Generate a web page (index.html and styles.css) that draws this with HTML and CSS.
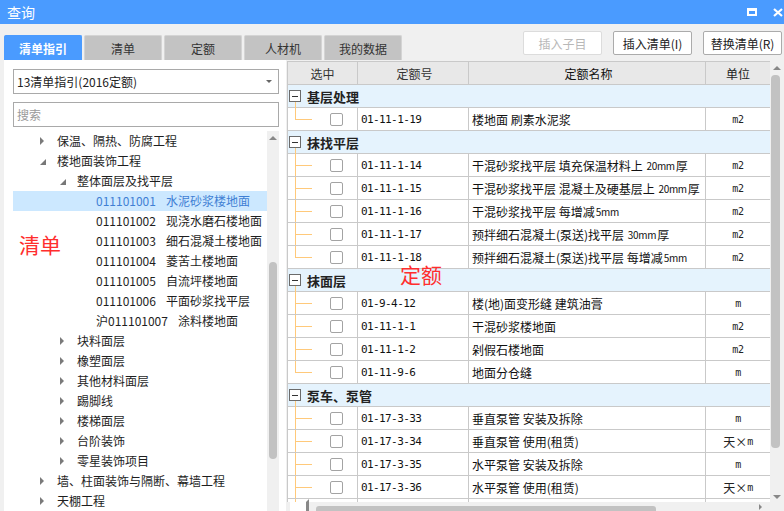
FILE: index.html
```html
<!DOCTYPE html>
<html lang="zh">
<head>
<meta charset="utf-8">
<title>查询</title>
<link rel="stylesheet" href="styles.css">
</head>
<body>
<div class="titlebar">
  <span class="title">查询</span>
  <div class="win-btns">
    <span class="max-icon"></span>
    <svg class="close-icon" width="10" height="9" viewBox="0 0 10 9"><path d="M1 1 L9 8 M9 1 L1 8" stroke="#fff" stroke-width="2.2"/></svg>
  </div>
</div>
<div class="toolbar">
  <div class="tabs">
    <div class="tab active">清单指引</div>
    <div class="tab">清单</div>
    <div class="tab">定额</div>
    <div class="tab">人材机</div>
    <div class="tab">我的数据</div>
  </div>
  <div class="actions">
    <button class="btn disabled">插入子目</button>
    <button class="btn">插入清单(I)</button>
    <button class="btn">替换清单(R)</button>
  </div>
</div>
<div class="main">
  <div class="left">
    <div class="select"><span>13清单指引(2016定额)</span><span class="caret"></span></div>
    <div class="search">搜索</div>
    <div class="tree">
      <div class="tree-list">
        <div class="tr l1"><span class="tw closed"></span>保温、隔热、防腐工程</div>
        <div class="tr l1"><span class="tw open"></span>楼地面装饰工程</div>
        <div class="tr l2"><span class="tw open"></span>整体面层及找平层</div>
        <div class="tr l3 sel"><span class="code">011101001</span>水泥砂浆楼地面</div>
        <div class="tr l3"><span class="code">011101002</span>现浇水磨石楼地面</div>
        <div class="tr l3"><span class="code">011101003</span>细石混凝土楼地面</div>
        <div class="tr l3"><span class="code">011101004</span>菱苦土楼地面</div>
        <div class="tr l3"><span class="code">011101005</span>自流坪楼地面</div>
        <div class="tr l3"><span class="code">011101006</span>平面砂浆找平层</div>
        <div class="tr l3"><span class="code">沪011101007</span>涂料楼地面</div>
        <div class="tr l2"><span class="tw closed"></span>块料面层</div>
        <div class="tr l2"><span class="tw closed"></span>橡塑面层</div>
        <div class="tr l2"><span class="tw closed"></span>其他材料面层</div>
        <div class="tr l2"><span class="tw closed"></span>踢脚线</div>
        <div class="tr l2"><span class="tw closed"></span>楼梯面层</div>
        <div class="tr l2"><span class="tw closed"></span>台阶装饰</div>
        <div class="tr l2"><span class="tw closed"></span>零星装饰项目</div>
        <div class="tr l1"><span class="tw closed"></span>墙、柱面装饰与隔断、幕墙工程</div>
        <div class="tr l1"><span class="tw closed"></span>天棚工程</div>
      </div>
      <div class="vscroll small">
        <span class="arr up"></span>
        <div class="track"><div class="thumb"></div></div>
      </div>
      <div class="note note-left">清单</div>
    </div>
  </div>
  <div class="right">
    <div class="upper">
      <div class="grid">
        <div class="row head">
          <div class="c c1h">选中</div><div class="c c2 center">定额号</div><div class="c c3 center">定额名称</div><div class="c c4">单位</div>
        </div>
        <div class="row g"><span class="box"></span>基层处理</div>
        <div class="row d last"><div class="c c1"><span class="chk"></span></div><div class="c c2">01-11-1-19</div><div class="c c3">楼地面 刷素水泥浆</div><div class="c c4">m2</div></div>
        <div class="row g"><span class="box"></span>抹找平层</div>
        <div class="row d"><div class="c c1"><span class="chk"></span></div><div class="c c2">01-11-1-14</div><div class="c c3">干混砂浆找平层 填充保温材料上 <span class="n">20mm</span>厚</div><div class="c c4">m2</div></div>
        <div class="row d"><div class="c c1"><span class="chk"></span></div><div class="c c2">01-11-1-15</div><div class="c c3">干混砂浆找平层 混凝土及硬基层上 <span class="n">20mm</span>厚</div><div class="c c4">m2</div></div>
        <div class="row d"><div class="c c1"><span class="chk"></span></div><div class="c c2">01-11-1-16</div><div class="c c3">干混砂浆找平层 每增减<span class="n">5mm</span></div><div class="c c4">m2</div></div>
        <div class="row d"><div class="c c1"><span class="chk"></span></div><div class="c c2">01-11-1-17</div><div class="c c3">预拌细石混凝土(泵送)找平层 <span class="n">30mm</span>厚</div><div class="c c4">m2</div></div>
        <div class="row d last"><div class="c c1"><span class="chk"></span></div><div class="c c2">01-11-1-18</div><div class="c c3">预拌细石混凝土(泵送)找平层 每增减<span class="n">5mm</span></div><div class="c c4">m2</div></div>
        <div class="row g"><span class="box"></span>抹面层</div>
        <div class="row d"><div class="c c1"><span class="chk"></span></div><div class="c c2">01-9-4-12</div><div class="c c3">楼(地)面变形缝 建筑油膏</div><div class="c c4">m</div></div>
        <div class="row d"><div class="c c1"><span class="chk"></span></div><div class="c c2">01-11-1-1</div><div class="c c3">干混砂浆楼地面</div><div class="c c4">m2</div></div>
        <div class="row d"><div class="c c1"><span class="chk"></span></div><div class="c c2">01-11-1-2</div><div class="c c3">剁假石楼地面</div><div class="c c4">m2</div></div>
        <div class="row d last"><div class="c c1"><span class="chk"></span></div><div class="c c2">01-11-9-6</div><div class="c c3">地面分仓缝</div><div class="c c4">m</div></div>
        <div class="row g"><span class="box"></span>泵车、泵管</div>
        <div class="row d"><div class="c c1"><span class="chk"></span></div><div class="c c2">01-17-3-33</div><div class="c c3">垂直泵管 安装及拆除</div><div class="c c4">m</div></div>
        <div class="row d"><div class="c c1"><span class="chk"></span></div><div class="c c2">01-17-3-34</div><div class="c c3">垂直泵管 使用(租赁)</div><div class="c c4"><span class="cj">天×</span>m</div></div>
        <div class="row d"><div class="c c1"><span class="chk"></span></div><div class="c c2">01-17-3-35</div><div class="c c3">水平泵管 安装及拆除</div><div class="c c4">m</div></div>
        <div class="row d"><div class="c c1"><span class="chk"></span></div><div class="c c2">01-17-3-36</div><div class="c c3">水平泵管 使用(租赁)</div><div class="c c4"><span class="cj">天×</span>m</div></div>
        <div class="row d"><div class="c c1"><span class="chk"></span></div><div class="c c2"></div><div class="c c3"></div><div class="c c4"></div></div>
      </div>
      <div class="vscroll big">
        <span class="arr up"></span>
        <div class="track"><div class="thumb"></div></div>
        <span class="arr down"></span>
      </div>
    </div>
    <div class="hscroll">
      <span class="arr left"></span>
      <div class="htrack"><div class="hthumb"></div></div>
      <span class="arr rightarr"></span>
    </div>
    <div class="note note-right">定额</div>
  </div>
</div>
</body>
</html>
```

FILE: styles.css
```css
* { box-sizing: border-box; }
body {
  margin: 0;
  width: 784px;
  height: 511px;
  overflow: hidden;
  background: #f0f0f0;
  font-family: "Noto Sans CJK SC", "Microsoft YaHei", sans-serif;
  font-size: 12px;
  color: #222;
}
.titlebar {
  height: 24px;
  background: #4a9bff;
  display: flex;
  align-items: center;
  padding: 0 1px 0 7px;
  color: #fff;
}
.title { font-size: 14px; line-height: 24px; }
.win-btns { margin-left: auto; display: flex; align-items: center; gap: 16px; }
.max-icon {
  width: 10px; height: 8px;
  border: 2px solid #fff;
  border-top-width: 3px;
}
.close-icon { display: block; }

.toolbar { display: flex; height: 36px; padding-left: 4px; }
.tabs { display: flex; align-self: flex-end; gap: 2px; }
.tab {
  width: 78px; height: 25px;
  display: flex; align-items: center; justify-content: center;
  background: #c3c3c3;
  color: #333;
  border: 1px solid #d4d4d4;
  border-bottom: none;
  border-radius: 2px 2px 0 0;
}
.tab.active { background: #4a9bff; border-color: #4a9bff; color: #fff; font-weight: bold; }
.actions { margin-left: auto; display: flex; gap: 11px; padding: 7px 2px 0 0; align-items: flex-start; }
.btn {
  width: 79px; height: 24px;
  background: #fff;
  border: 1px solid #ababab;
  border-radius: 2px;
  font-family: inherit;
  font-size: 12px;
  color: #222;
  padding: 0;
}
.btn.disabled { border-color: #dcdcdc; color: #b8b8b8; }

.main { display: flex; height: 451px; padding-left: 4px; }
.left {
  width: 282px;
  background: #fff;
  padding: 9px 7px 0 9px;
  display: flex;
  flex-direction: column;
}
.select {
  height: 25px;
  border: 1px solid #a9a9a9;
  display: flex; align-items: center;
  padding: 0 6px 0 3px;
  color: #222;
}
.caret {
  margin-left: auto;
  width: 0; height: 0;
  border-left: 3px solid transparent;
  border-right: 3px solid transparent;
  border-top: 3px solid #666;
}
.search {
  margin-top: 8px;
  height: 25px;
  border: 1px solid #a9a9a9;
  display: flex; align-items: center;
  padding-left: 3px;
  color: #9a9a9a;
}
.tree { margin-top: 4px; flex: 1; display: flex; position: relative; overflow: hidden; }
.tree-list { flex: 1; }
.tr { height: 20px; line-height: 20px; display: flex; align-items: center; white-space: nowrap; color: #1e1e1e; }
.tr.l1 { padding-left: 27px; }
.tr.l2 { padding-left: 47px; }
.tr.l3 { padding-left: 83px; }
.tr.sel { background: #cce8ff; color: #3f7fd4; }
.tw { width: 17px; height: 20px; display: flex; align-items: center; }
.tw.closed::before {
  content: ""; width: 0; height: 0;
  border-left: 4px solid #7a7a7a;
  border-top: 4px solid transparent;
  border-bottom: 4px solid transparent;
}
.tw.open::before {
  content: ""; width: 0; height: 0;
  border-left: 6px solid transparent;
  border-bottom: 6px solid #777;
  margin-top: 1px;
}
.code { margin-right: 10px; }

.vscroll { display: flex; flex-direction: column; align-items: center; background: #f0f0f0; }
.vscroll.small { width: 12px; }
.vscroll.big { width: 14px; }
.track { flex: 1; width: 100%; position: relative; }
.small .track { padding-top: 120px; }
.small .thumb { width: 8px; height: 197px; margin: 0 auto; background: #c2c2c2; border-radius: 4px; }
.big .track { padding-top: 3px; }
.big .thumb { width: 9px; height: 373px; margin-left: 1px; background: #c2c2c2; border-radius: 4px; }
.arr { width: 0; height: 0; display: block; }
.arr.up { border-left: 4px solid transparent; border-right: 4px solid transparent; border-bottom: 4px solid #888; margin: 5px 0 2px; }
.arr.down { border-left: 4px solid transparent; border-right: 4px solid transparent; border-top: 4px solid #888; margin: 2px 0 3px; }

.note { position: absolute; font-size: 21px; line-height: 1; color: #ff2d2d; }
.note-left { left: 6px; top: 103px; }
.note-right { left: 113px; top: 204px; }

.right { margin-left: 1px; width: 497px; padding-top: 1px; display: flex; flex-direction: column; position: relative; }
.upper { flex: 1; display: flex; overflow: hidden; }
.grid {
  width: 483px;
  background: #fff;
  border-left: 1px solid #c9c9c9;
  border-top: 1px solid #c9c9c9;
  overflow: hidden;
}
.row { display: flex; height: 23px; border-bottom: 1px solid #c9c9c9; }
.c { height: 22px; display: flex; align-items: center; border-right: 1px solid #c9c9c9; white-space: pre; overflow: hidden; }
.head { background: #e8e8e8; color: #333; }
.c1h { width: 70px; justify-content: center; }
.center { justify-content: center; }
.c1 { width: 70px; position: relative; padding-left: 42px; }
.c2 { width: 111px; padding-left: 3px; font-family: "DejaVu Sans Mono", monospace; font-size: 11px; letter-spacing: -0.6px; color: #111; }
.head .c2 { font-family: inherit; font-size: 12px; letter-spacing: 0; color: #333; }
.c3 { width: 237px; padding-left: 3px; color: #111; }
.n { font-size: 10px; letter-spacing: -0.3px; margin: 0 1px; }
.c4 { flex: 1; justify-content: center; border-right: none; font-size: 11px; color: #222; }
.head .c4 { font-size: 12px; }
.d .c4 { font-family: "DejaVu Sans Mono", "Noto Sans CJK SC", monospace; font-size: 10px; letter-spacing: -0.3px; }
.cj { font-family: "Noto Sans CJK SC", sans-serif; font-size: 12px; letter-spacing: 0; }
.c1::before { content: ""; position: absolute; left: 7px; top: -1px; bottom: -1px; width: 1px; background: #ffc97a; }
.last .c1::before { bottom: 11px; }
.c1::after { content: ""; position: absolute; left: 7px; top: 11px; width: 17px; height: 1px; background: #ffc97a; }
.chk { width: 13px; height: 13px; border: 1px solid #a3a3a3; border-radius: 2px; background: #fff; }
.g {
  background: #e5f3fd;
  align-items: center;
  padding-left: 1px;
  font-weight: bold;
  font-size: 13px;
  color: #222;
  position: relative;
}
.g::after { content: ""; position: absolute; left: 7px; top: 17px; bottom: -1px; width: 1px; background: #ffc97a; }
.box {
  width: 12px; height: 12px;
  border: 1px solid #6b6b6b;
  background: #fff;
  margin-right: 6px;
  display: flex; align-items: center; justify-content: center;
}
.box::before { content: ""; width: 6px; height: 1px; background: #333; }

.hscroll { height: 9px; width: 483px; background: #f0f0f0; display: flex; align-items: flex-end; }
.arr.left { border-top: 3px solid transparent; border-bottom: 3px solid transparent; border-right: 3px solid #888; margin: 0 7px 0 3px; align-self: center; }
.htrack { flex: 1; height: 5px; }
.hthumb { width: 340px; height: 5px; background: #c2c2c2; border-radius: 3px 3px 0 0; }
.arr.rightarr { border-top: 3px solid transparent; border-bottom: 3px solid transparent; border-left: 3px solid #888; margin: 0 8px 0 4px; align-self: center; }
```
